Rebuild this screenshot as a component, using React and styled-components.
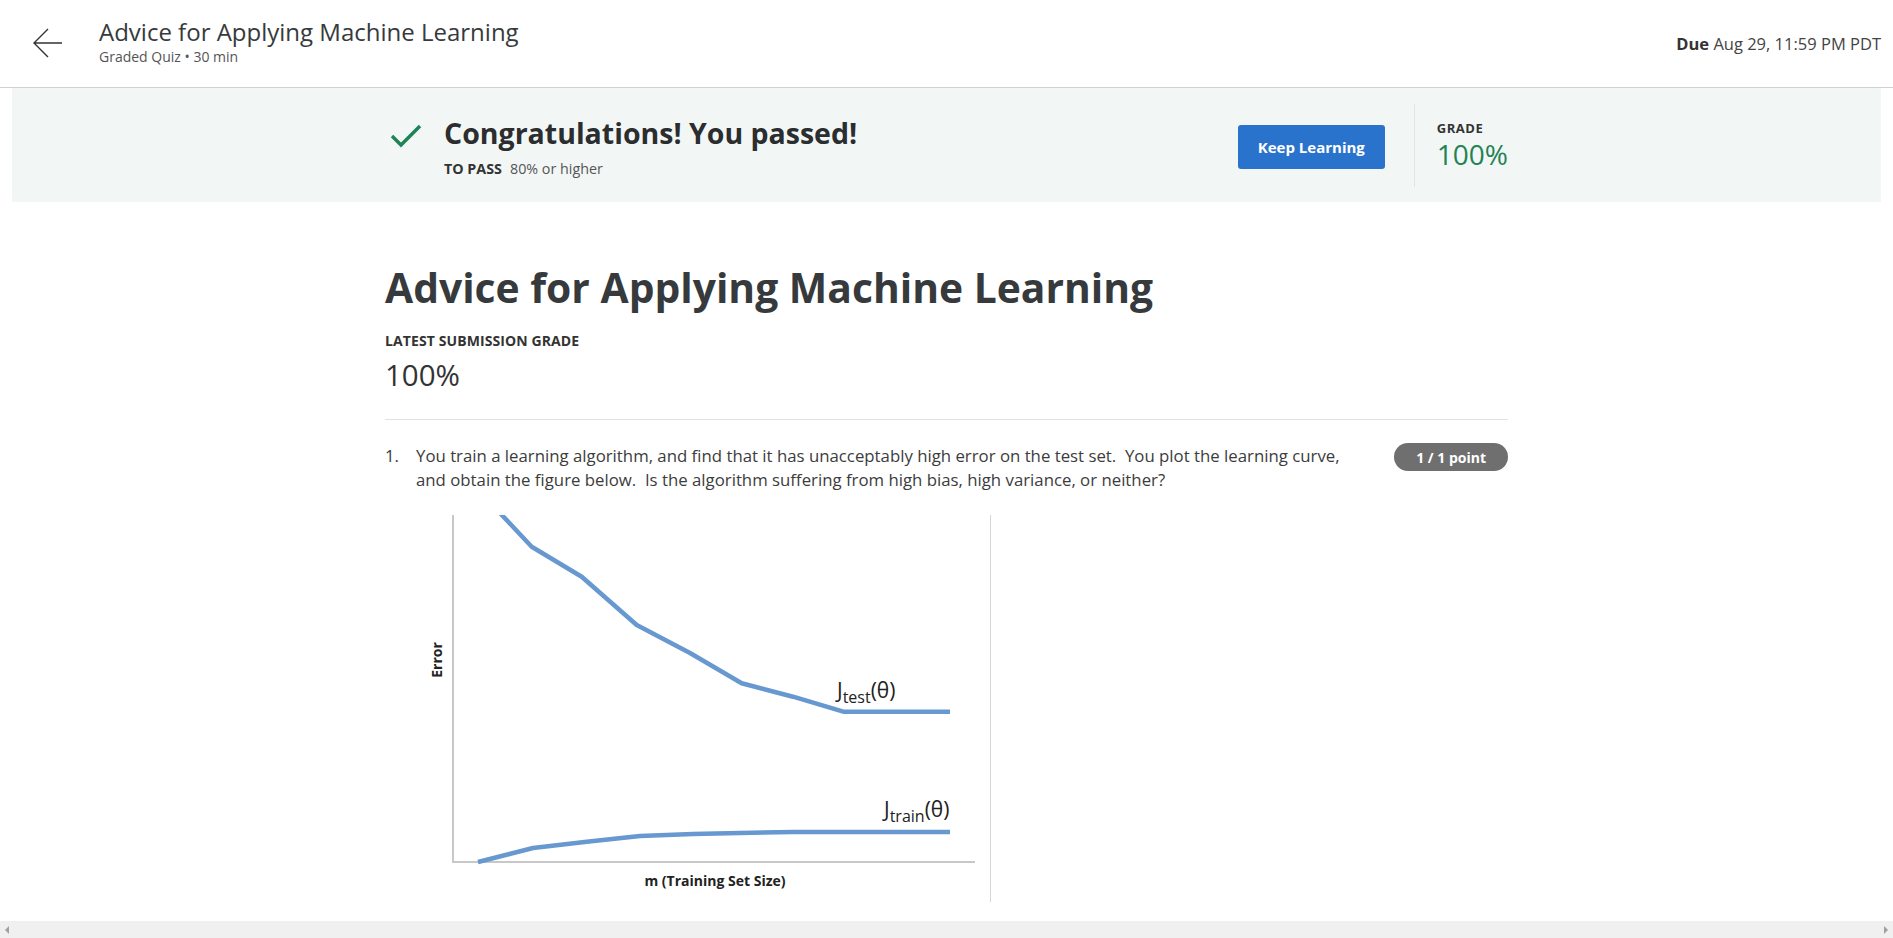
import React from "react";
import styled, { createGlobalStyle } from "styled-components";

const GlobalStyle = createGlobalStyle`
    body {
        margin: 0;
        background: #ffffff;
        font-family: "Open Sans", "Noto Sans", sans-serif;
        color: #333333;
    }
`;

const BackArrow = () => (
    <svg width="30" height="30" viewBox="0 0 30 30" fill="none" stroke="#333" strokeWidth="1.4">
        <path d="M29 15H1M15 1L1 15L15 29" />
    </svg>
);

const CheckIcon = () => (
    <svg width="32" height="26" viewBox="0 0 32 26" fill="none" stroke="#1f8354" strokeWidth="3.4">
        <path d="M2 13L11 22L30 3" />
    </svg>
);

const testCurve = "M84 -2 L115.7 31.7 L165.7 61.7 L220.7 110 L274 138 L325.7 168.3 L377 181.7 L427.3 196.7 L534 196.7";
const trainCurve = "M62 347 L117 333 L170.7 326.7 L224 321 L277 319 L377 317 L534 317";

const LearningCurve = () => (
    <svg width="576" height="390" viewBox="0 0 576 390">
        <path d="M37 0V347H559" stroke="#c8c8c8" strokeWidth="2" fill="none" />
        <path d="M574.5 0V387" stroke="#d6d6d6" strokeWidth="1" />
        <g stroke="#6798cf" strokeWidth="4.5" fill="none" strokeLinejoin="round">
            <path d={testCurve} />
            <path d={trainCurve} />
        </g>
        <g fontFamily="'Open Sans', sans-serif" fill="#222">
            <text x="21" y="145" fontSize="14" fontWeight="700" textAnchor="middle" transform="rotate(-90 21 145)" dy="5">Error</text>
            <text x="299" y="371" fontSize="14" fontWeight="700" textAnchor="middle">m (Training Set Size)</text>
            <text x="421" y="183" fontSize="21">
                J<tspan fontSize="16" dy="5">test</tspan><tspan dy="-5">(θ)</tspan>
            </text>
            <text x="468" y="302" fontSize="21">
                J<tspan fontSize="16" dy="5">train</tspan><tspan dy="-5">(θ)</tspan>
            </text>
        </g>
    </svg>
);

const question =
    "You train a learning algorithm, and find that it has unacceptably high error on the test set.  You plot the learning curve, and obtain the figure below.  Is the algorithm suffering from high bias, high variance, or neither?";

const App = () => {
    return (
        <>
            <GlobalStyle />
            <St.Header>
                <St.BackButton aria-label="Back">
                    <BackArrow />
                </St.BackButton>
                <St.HeaderText>
                    <St.HeaderTitle>Advice for Applying Machine Learning</St.HeaderTitle>
                    <St.HeaderSub>Graded Quiz • 30 min</St.HeaderSub>
                </St.HeaderText>
                <St.Due>
                    <b>Due</b> Aug 29, 11:59 PM PDT
                </St.Due>
            </St.Header>

            <St.Banner>
                <St.Column>
                    <St.BannerRow>
                        <St.Passed>
                            <St.CheckWrap>
                                <CheckIcon />
                            </St.CheckWrap>
                            <div>
                                <St.PassedTitle>Congratulations! You passed!</St.PassedTitle>
                                <St.PassLine>
                                    <b>TO PASS</b>80% or higher
                                </St.PassLine>
                            </div>
                        </St.Passed>
                        <St.BannerRight>
                            <St.KeepButton>Keep Learning</St.KeepButton>
                            <St.VDivider />
                            <div>
                                <St.Label>GRADE</St.Label>
                                <St.GradeValue $green>100%</St.GradeValue>
                            </div>
                        </St.BannerRight>
                    </St.BannerRow>
                </St.Column>
            </St.Banner>

            <St.Column>
                <St.PageTitle>Advice for Applying Machine Learning</St.PageTitle>
                <St.Summary>
                    <St.Label $large>LATEST SUBMISSION GRADE</St.Label>
                    <St.GradeValue $large>100%</St.GradeValue>
                </St.Summary>

                <St.Question>
                    <St.QNumber>1.</St.QNumber>
                    <St.QBody>
                        <St.QText>{question}</St.QText>
                        <St.Figure>
                            <LearningCurve />
                        </St.Figure>
                    </St.QBody>
                    <St.Points>1 / 1 point</St.Points>
                </St.Question>
            </St.Column>

            <St.ScrollBar>
                <St.ScrollArrow $dir="left" />
                <St.ScrollArrow $dir="right" />
            </St.ScrollBar>
        </>
    );
};

export default App;

const St = {
    Header: styled.header`
        display: flex;
        align-items: flex-start;
        height: 87px;
        padding: 0 12px 0 33px;
        border-bottom: 1px solid #d2d2d2;
    `,

    BackButton: styled.button`
        display: flex;
        margin-top: 28px;
        padding: 0;
        border: none;
        background: none;
        cursor: pointer;
    `,

    HeaderText: styled.div`
        margin-left: 36px;
        padding-top: 17px;
    `,

    HeaderTitle: styled.div`
        font-size: 24px;
        line-height: 30px;
        color: #373a3c;
    `,

    HeaderSub: styled.div`
        font-size: 14px;
        line-height: 20px;
        color: #555;
    `,

    Due: styled.div`
        margin-left: auto;
        padding-top: 32px;
        font-size: 16.5px;
        line-height: 24px;
        color: #444;

        b {
            color: #333;
        }
    `,

    Banner: styled.section`
        margin: 0 12px;
        background: #f2f7f6;
    `,

    Column: styled.div`
        width: 1123px;
        margin: 0 auto;
    `,

    BannerRow: styled.div`
        display: flex;
        align-items: center;
        justify-content: space-between;
        height: 114px;
    `,

    Passed: styled.div`
        display: flex;
        align-items: flex-start;
        gap: 22px;
        padding: 4px 0 0 5px;
    `,

    CheckWrap: styled.div`
        display: flex;
        margin-top: 8px;
    `,

    PassedTitle: styled.h2`
        margin: 0;
        font-size: 28.5px;
        line-height: 36px;
        font-weight: 700;
        color: #2b2d2f;
    `,

    PassLine: styled.div`
        margin-top: 8px;
        font-size: 14.3px;
        line-height: 20px;
        color: #555;

        b {
            margin-right: 8px;
            font-weight: 700;
            color: #333;
        }
    `,

    BannerRight: styled.div`
        display: flex;
        align-items: center;
        align-self: stretch;
    `,

    KeepButton: styled.button`
        height: 44px;
        margin-top: 4px;
        padding: 0 20px;
        border: none;
        border-radius: 3px;
        background: #2a73cc;
        color: #fff;
        font-family: inherit;
        font-size: 15px;
        font-weight: 700;
        cursor: pointer;
    `,

    VDivider: styled.div`
        align-self: stretch;
        width: 1px;
        margin: 16px 22px 15px 29px;
        background: #e1e4e3;
    `,

    Label: styled.div`
        font-size: ${(p) => (p.$large ? "14px" : "13px")};
        line-height: ${(p) => (p.$large ? "20px" : "18px")};
        font-weight: 700;
        letter-spacing: ${(p) => (p.$large ? "0.1px" : "0.5px")};
        color: #333;
    `,

    GradeValue: styled.div`
        margin-top: ${(p) => (p.$large ? "6px" : "0")};
        font-size: ${(p) => (p.$large ? "29.5px" : "28px")};
        line-height: ${(p) => (p.$large ? "36px" : "34px")};
        font-weight: 400;
        color: ${(p) => (p.$green ? "#1f8354" : "#333")};
    `,

    PageTitle: styled.h1`
        margin: 61px 0 0;
        font-size: 40.8px;
        line-height: 48px;
        font-weight: 700;
        color: #373a3c;
    `,

    Summary: styled.div`
        padding: 20px 0 26px;
        border-bottom: 1px solid #e2e2e2;
    `,

    Question: styled.div`
        display: flex;
        align-items: flex-start;
        padding-top: 24px;
    `,

    QNumber: styled.div`
        width: 31px;
        font-size: 16.8px;
        line-height: 24px;
        color: #3c3c3c;
    `,

    QBody: styled.div`
        flex: 1;
        margin-right: 30px;
    `,

    QText: styled.p`
        margin: 0;
        font-size: 16.8px;
        line-height: 24px;
        color: #3c3c3c;
        white-space: pre-wrap;
    `,

    Figure: styled.div`
        display: flex;
        margin-top: 23px;
    `,

    Points: styled.div`
        display: flex;
        align-items: center;
        height: 28px;
        margin-top: -1px;
        padding: 0 22px;
        border-radius: 14px;
        background: #6f6f6f;
        color: #fff;
        font-size: 14px;
        font-weight: 700;
        white-space: nowrap;
    `,

    ScrollBar: styled.div`
        position: fixed;
        left: 0;
        right: 0;
        bottom: 0;
        display: flex;
        align-items: center;
        justify-content: space-between;
        height: 17px;
        padding: 0 5px;
        background: #f0f0f0;
    `,

    ScrollArrow: styled.span`
        width: 0;
        height: 0;
        border-top: 4px solid transparent;
        border-bottom: 4px solid transparent;
        ${(p) => (p.$dir === "left" ? "border-right: 4px solid #a0a0a0;" : "border-left: 4px solid #a0a0a0;")}
    `,
};
